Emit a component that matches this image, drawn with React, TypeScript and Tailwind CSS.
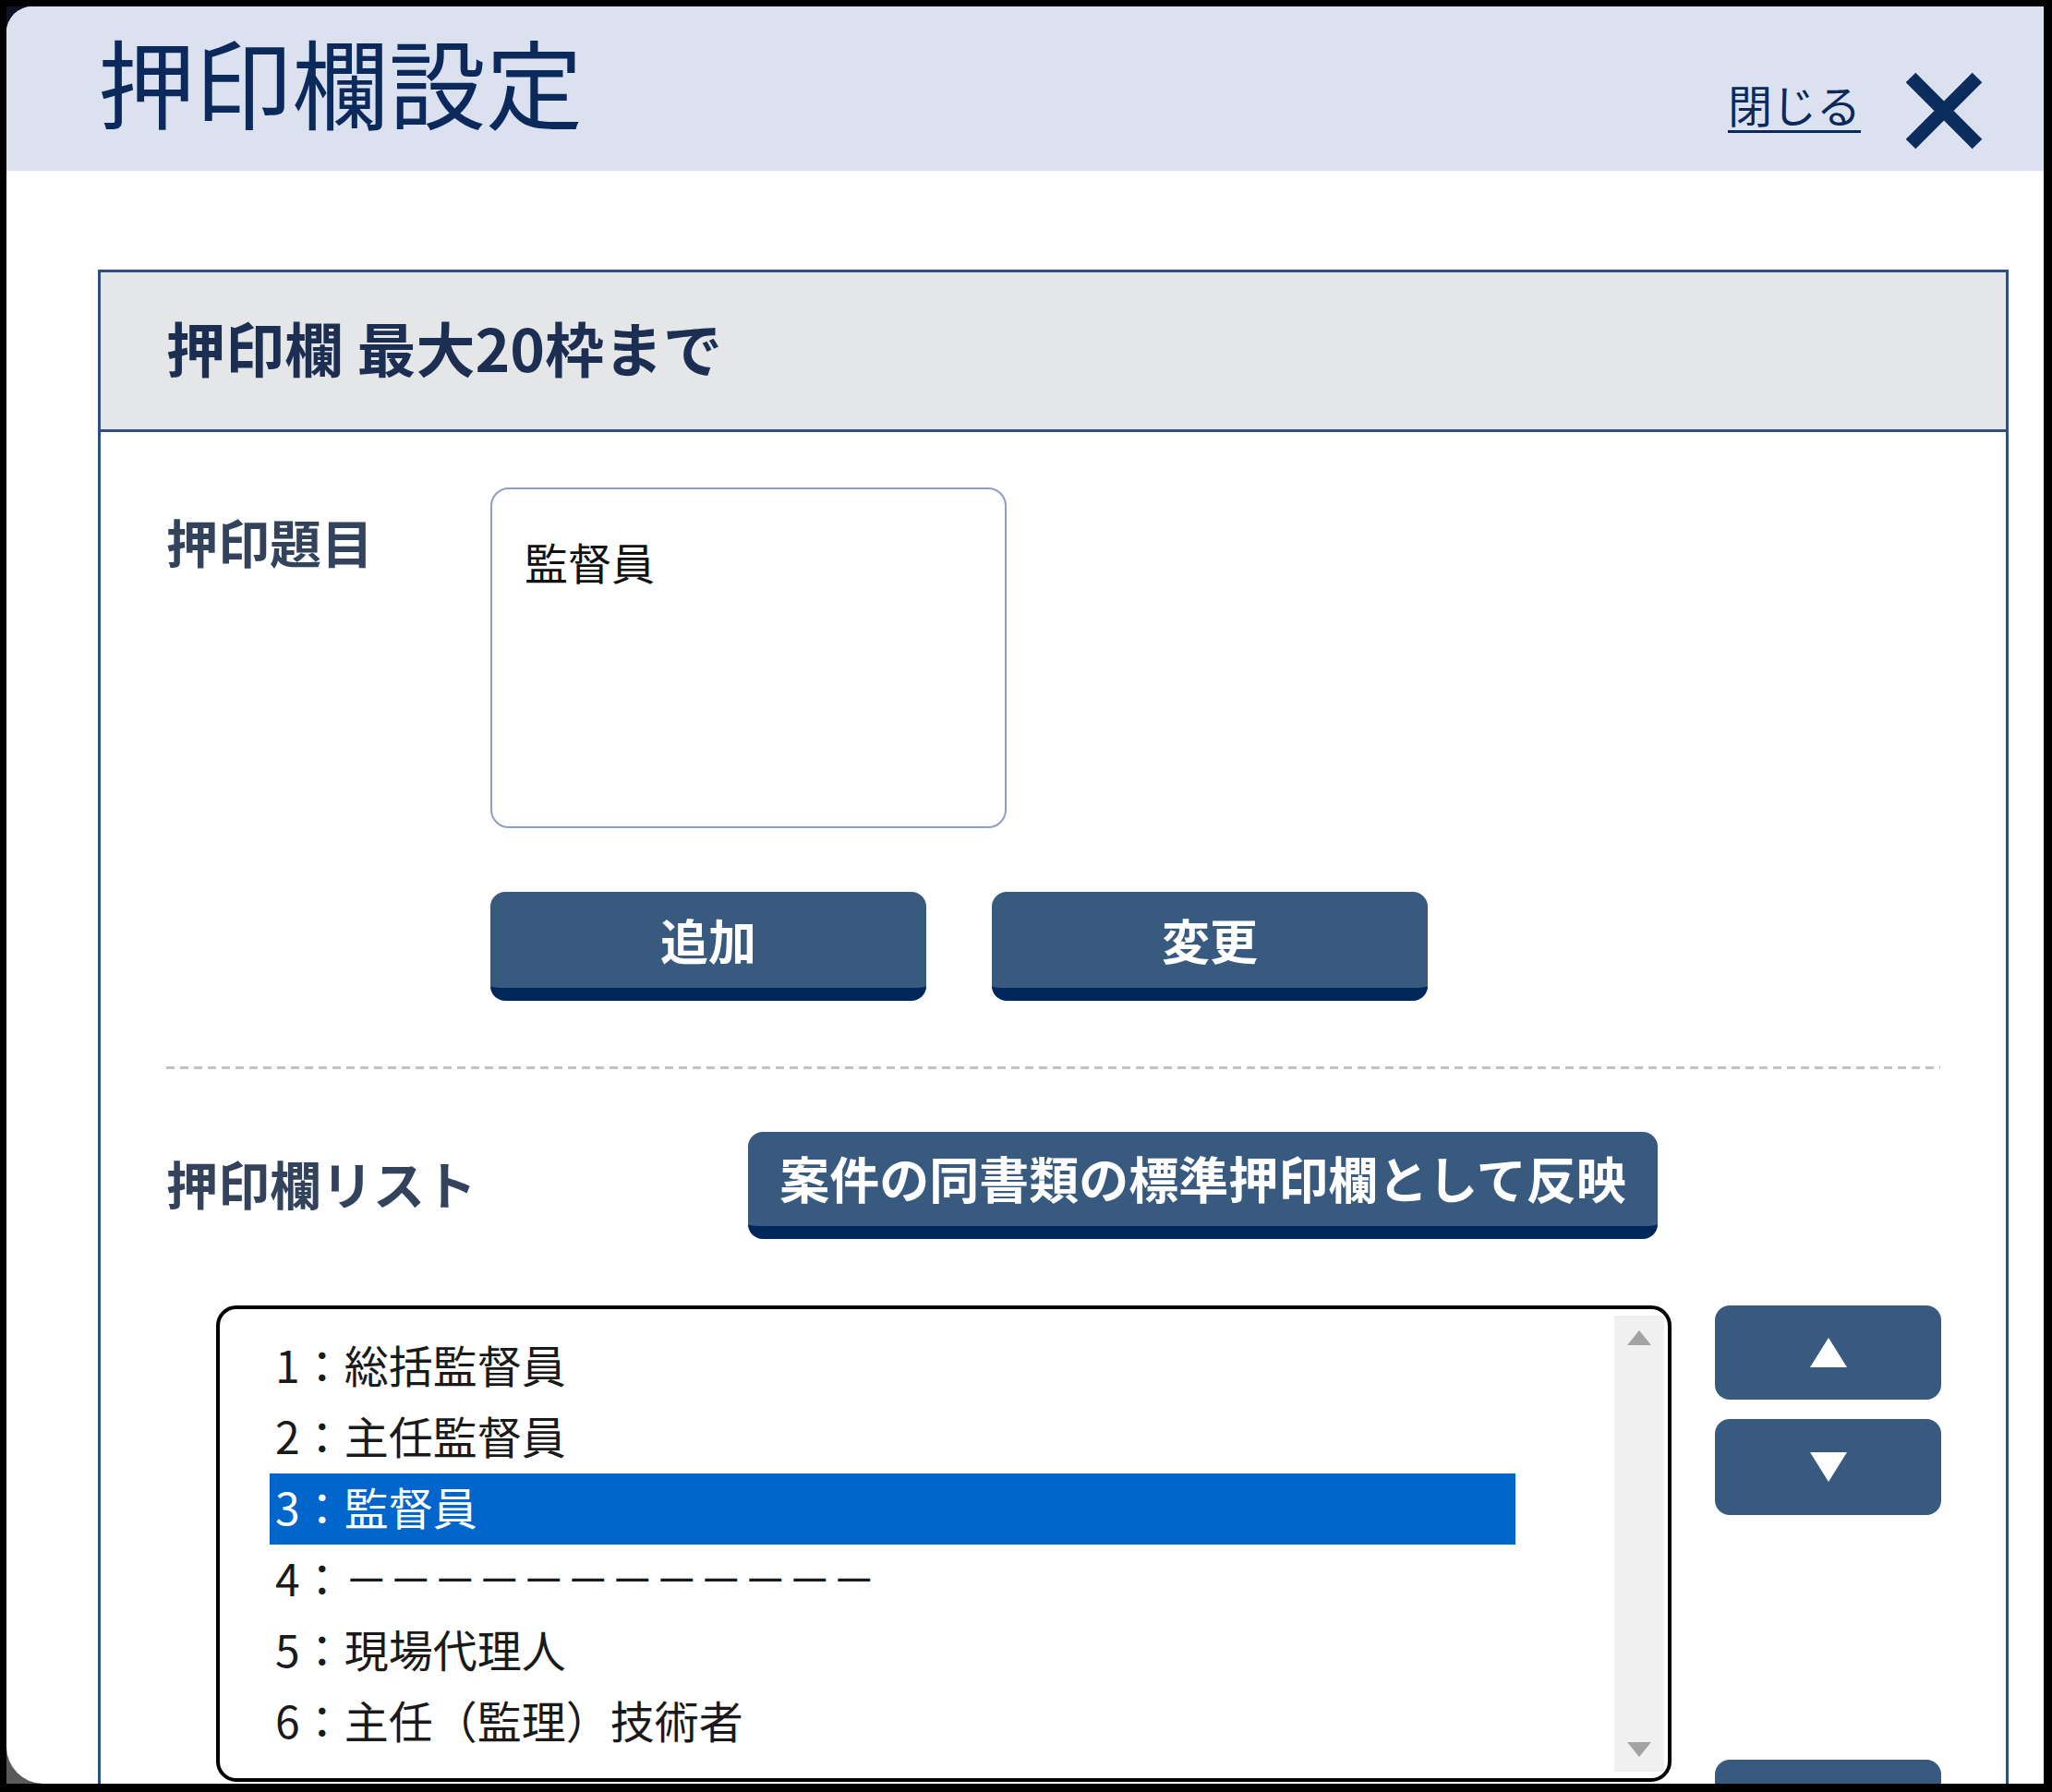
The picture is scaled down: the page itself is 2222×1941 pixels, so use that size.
const items = [
  "1：総括監督員",
  "2：主任監督員",
  "3：監督員",
  "4：－－－－－－－－－－－－",
  "5：現場代理人",
  "6：主任（監理）技術者",
];

function CloseIcon() {
  return (
    <svg width="84" height="84" viewBox="0 0 84 84" className="ml-[48px] mt-[71px] shrink-0">
      <path d="M6 6 L78 78 M78 6 L6 78" stroke="#0b2d5e" strokeWidth="15" fill="none" />
    </svg>
  );
}

function NavyButton({ label, className }: { label: string; className: string }) {
  return (
    <button
      className={
        "flex items-center justify-center bg-[#385a7e] border-b-[14px] border-[#00275a] rounded-[16px] text-white font-bold leading-none " +
        className
      }
    >
      {label}
    </button>
  );
}

export default function App() {
  return (
    <div className="w-[2222px] h-[1941px] bg-black pt-[7px] pl-[7px] pr-[9px] pb-[9px] overflow-hidden font-['Noto_Sans_CJK_JP','Noto_Sans',sans-serif]">
      <div className="h-full bg-gradient-to-b from-[#0d1428] to-[#5a5a5a]">
        <div className="h-full bg-white rounded-tl-[28px] rounded-bl-[40px] overflow-hidden flex flex-col">
          {/* Header */}
          <div className="h-[178px] shrink-0 bg-[#dce1ef] flex items-start pl-[99px] pr-[66px]">
            <h1 className="mt-[27px] text-[105px] leading-none font-normal text-[#0b2a5b]">押印欄設定</h1>
            <a className="ml-auto mt-[81px] text-[48px] leading-none text-[#0b2a5b] underline underline-offset-[8px] decoration-[3px]">
              閉じる
            </a>
            <CloseIcon />
          </div>

          {/* Content */}
          <div className="pt-[107px] pl-[99px] pr-[38px]">
            <div className="border-[3px] border-b-0 border-[#2f4f7f]">
              <div className="h-[173px] bg-[#e5e6e8] border-b-[3px] border-[#2f4f7f] flex items-center px-[71px] pb-[10px]">
                <h2 className="text-[64px] leading-none font-bold text-[#1c2f52]">押印欄 最大20枠まで</h2>
              </div>

              <div className="px-[71px] pt-[60px] pb-[80px]">
                {/* Title input */}
                <div className="flex">
                  <div className="w-[351px] shrink-0 pt-[30px] text-[56px] leading-none font-bold text-[#33435c]">押印題目</div>
                  <div className="w-[559px] h-[369px] border-2 border-[#8f9dc0] rounded-[20px] pl-[35px] pt-[54px] text-[47px] leading-none text-[#111]">
                    監督員
                  </div>
                </div>

                <div className="flex gap-[71px] ml-[351px] mt-[69px]">
                  <NavyButton label="追加" className="w-[472px] h-[118px] text-[52px]" />
                  <NavyButton label="変更" className="w-[472px] h-[118px] text-[52px]" />
                </div>

                <div className="mt-[71px] h-[3px] bg-[repeating-linear-gradient(to_right,#c2c2c2_0_9px,transparent_9px_15px)]" />

                {/* List header */}
                <div className="flex mt-[68px]">
                  <div className="w-[630px] shrink-0 pt-[27px] text-[56px] leading-none font-bold text-[#33435c]">押印欄リスト</div>
                  <NavyButton label="案件の同書類の標準押印欄として反映" className="w-[985px] h-[116px] text-[54px] pb-[2px]" />
                </div>

                {/* List + order buttons */}
                <div className="flex mt-[72px] ml-[54px]">
                  <div className="w-[1576px] h-[516px] shrink-0 border-4 border-black rounded-[22px] flex overflow-hidden">
                    <div className="flex-1 pt-[24px] pl-[54px]">
                      {items.map((item, i) => (
                        <div
                          key={item}
                          className={
                            "w-[1349px] h-[77px] flex items-center pl-[6px] pb-[8px] text-[48px] leading-none " +
                            (i === 2 ? "bg-[#0066cc] text-white" : "text-[#1a1a1a]")
                          }
                        >
                          {item}
                        </div>
                      ))}
                    </div>
                    <div className="w-[54px] my-[7px] mr-[4px] bg-[#f0f0f0] flex flex-col items-center justify-between py-[16px]">
                      <svg width="26" height="16" viewBox="0 0 26 16">
                        <path d="M13 0 L26 16 L0 16 Z" fill="#a3a3a3" />
                      </svg>
                      <svg width="26" height="16" viewBox="0 0 26 16">
                        <path d="M0 0 L26 0 L13 16 Z" fill="#a3a3a3" />
                      </svg>
                    </div>
                  </div>

                  <div className="ml-[47px] flex flex-col">
                    <button className="w-[245px] h-[102px] bg-[#385a7e] rounded-[16px] flex items-center justify-center">
                      <svg width="40" height="32" viewBox="0 0 40 32">
                        <path d="M20 0 L40 32 L0 32 Z" fill="#fff" />
                      </svg>
                    </button>
                    <button className="w-[245px] h-[104px] mt-[21px] bg-[#385a7e] rounded-[16px] flex items-center justify-center">
                      <svg width="40" height="32" viewBox="0 0 40 32">
                        <path d="M0 0 L40 0 L20 32 Z" fill="#fff" />
                      </svg>
                    </button>
                    <button className="w-[245px] h-[102px] mt-[265px] bg-[#385a7e] rounded-[16px]" />
                  </div>
                </div>
              </div>
            </div>
          </div>
        </div>
      </div>
    </div>
  );
}
